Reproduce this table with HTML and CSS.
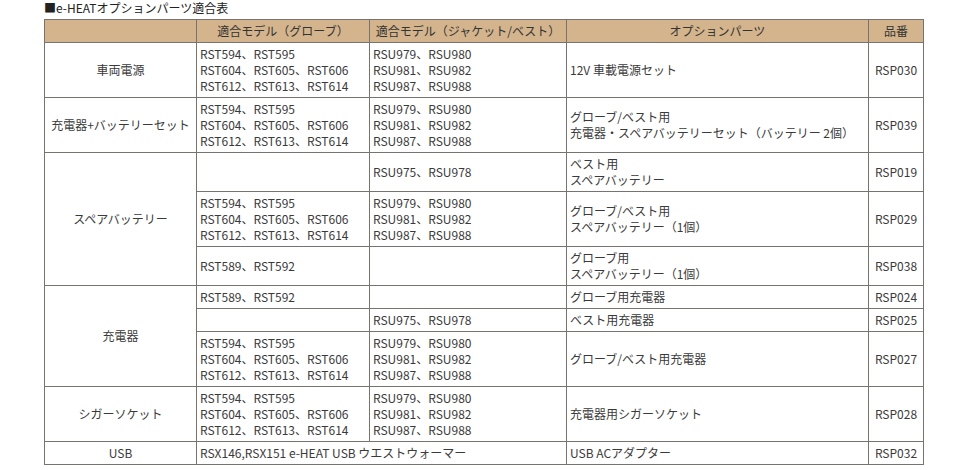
FILE: index.html
```html
<!DOCTYPE html>
<html lang="ja">
<head>
<meta charset="utf-8">
<title>e-HEATオプションパーツ適合表</title>
<link rel="stylesheet" href="styles.css">
</head>
<body>
<div class="page">
  <p class="title">■e-HEATオプションパーツ適合表</p>
  <table class="fit">
    <colgroup>
      <col class="c1"><col class="c2"><col class="c3"><col class="c4"><col class="c5">
    </colgroup>
    <thead>
      <tr>
        <th></th>
        <th>適合モデル（グローブ）</th>
        <th>適合モデル（ジャケット/ベスト）</th>
        <th>オプションパーツ</th>
        <th>品番</th>
      </tr>
    </thead>
    <tbody>
      <tr>
        <td class="cat">車両電源</td>
        <td>RST594、RST595<br>RST604、RST605、RST606<br>RST612、RST613、RST614</td>
        <td>RSU979、RSU980<br>RSU981、RSU982<br>RSU987、RSU988</td>
        <td>12V 車載電源セット</td>
        <td class="no">RSP030</td>
      </tr>
      <tr>
        <td class="cat">充電器+バッテリーセット</td>
        <td>RST594、RST595<br>RST604、RST605、RST606<br>RST612、RST613、RST614</td>
        <td>RSU979、RSU980<br>RSU981、RSU982<br>RSU987、RSU988</td>
        <td>グローブ/ベスト用<br>充電器・スペアバッテリーセット（バッテリー 2個）</td>
        <td class="no">RSP039</td>
      </tr>
      <tr>
        <td class="cat" rowspan="3">スペアバッテリー</td>
        <td></td>
        <td>RSU975、RSU978</td>
        <td>ベスト用<br>スペアバッテリー</td>
        <td class="no">RSP019</td>
      </tr>
      <tr>
        <td>RST594、RST595<br>RST604、RST605、RST606<br>RST612、RST613、RST614</td>
        <td>RSU979、RSU980<br>RSU981、RSU982<br>RSU987、RSU988</td>
        <td>グローブ/ベスト用<br>スペアバッテリー（1個）</td>
        <td class="no">RSP029</td>
      </tr>
      <tr>
        <td>RST589、RST592</td>
        <td></td>
        <td>グローブ用<br>スペアバッテリー（1個）</td>
        <td class="no">RSP038</td>
      </tr>
      <tr>
        <td class="cat" rowspan="3">充電器</td>
        <td>RST589、RST592</td>
        <td></td>
        <td>グローブ用充電器</td>
        <td class="no">RSP024</td>
      </tr>
      <tr>
        <td></td>
        <td>RSU975、RSU978</td>
        <td>ベスト用充電器</td>
        <td class="no">RSP025</td>
      </tr>
      <tr>
        <td>RST594、RST595<br>RST604、RST605、RST606<br>RST612、RST613、RST614</td>
        <td>RSU979、RSU980<br>RSU981、RSU982<br>RSU987、RSU988</td>
        <td>グローブ/ベスト用充電器</td>
        <td class="no">RSP027</td>
      </tr>
      <tr>
        <td class="cat">シガーソケット</td>
        <td>RST594、RST595<br>RST604、RST605、RST606<br>RST612、RST613、RST614</td>
        <td>RSU979、RSU980<br>RSU981、RSU982<br>RSU987、RSU988</td>
        <td>充電器用シガーソケット</td>
        <td class="no">RSP028</td>
      </tr>
      <tr>
        <td class="cat">USB</td>
        <td colspan="2">RSX146,RSX151 e-HEAT USB ウエストウォーマー</td>
        <td>USB ACアダプター</td>
        <td class="no">RSP032</td>
      </tr>
    </tbody>
  </table>
</div>
</body>
</html>
```

FILE: styles.css
```css
html, body {
  margin: 0;
  padding: 0;
  background: #ffffff;
}

body {
  font-family: "Noto Sans CJK JP", "Noto Sans", sans-serif;
  font-size: 12px;
  line-height: 16px;
  color: #3a3a3a;
}

.page {
  padding: 0 0 0 44px;
}

.title {
  margin: 0 0 3px 0;
  height: 16px;
  color: #222222;
}

.fit {
  border-collapse: collapse;
  table-layout: fixed;
  width: 879px;
}

.fit .c1 { width: 152px; }
.fit .c2 { width: 173px; }
.fit .c3 { width: 197px; }
.fit .c4 { width: 302px; }
.fit .c5 { width: 55px; }

.fit th,
.fit td {
  border: 1px solid #777470;
  padding: 3px 3px;
  vertical-align: middle;
  text-align: left;
  white-space: nowrap;
}

.fit th {
  background: #d4b48c;
  font-weight: normal;
  text-align: center;
  color: #333333;
}

.fit td.cat,
.fit td.no {
  text-align: center;
}
```
